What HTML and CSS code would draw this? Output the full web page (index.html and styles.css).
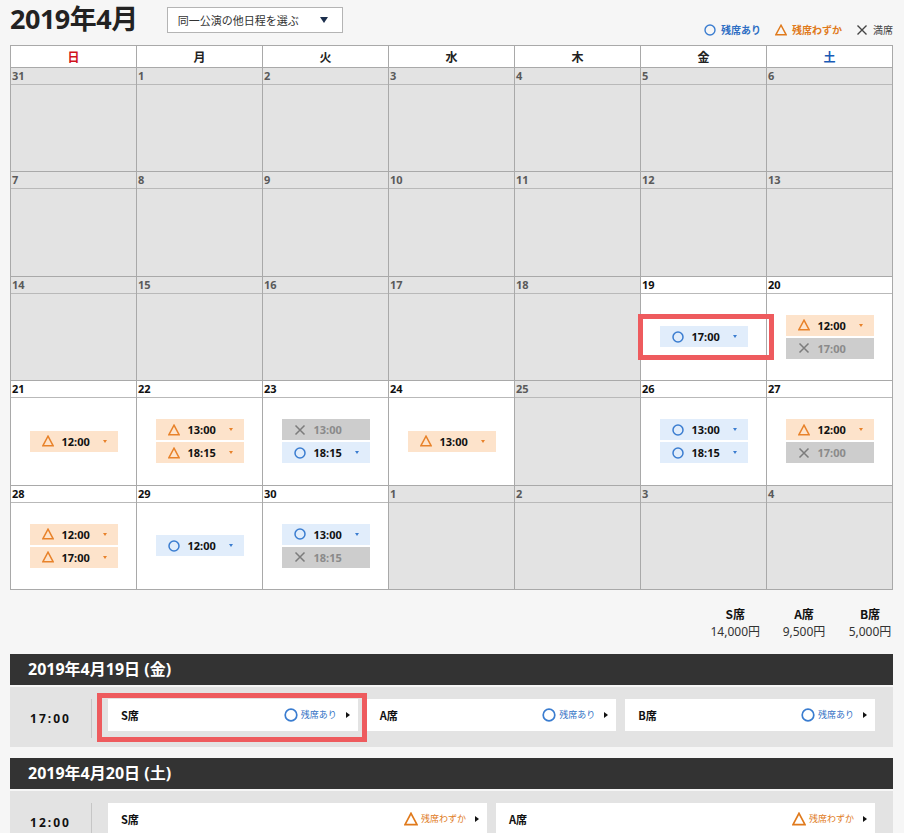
FILE: index.html
```html
<!DOCTYPE html>
<html lang="ja">

<head>
    <meta charset="UTF-8">
    <meta name="viewport" content="width=device-width, initial-scale=1.0">
    <title>公演日程</title>
    <link rel="stylesheet" href="styles.css">
</head>

<body>
    <div class="page">

        <!-- month title / other dates / legend -->
        <div class="top">
            <h1 class="month">2019年4月</h1>
            <div class="select">同一公演の他日程を選ぶ<span class="caret"></span></div>
            <ul class="legend">
                <li class="ok"><svg class="ico" viewBox="0 0 12 12"><circle cx="6" cy="6" r="5"/></svg>残席あり</li>
                <li class="few"><svg class="ico" viewBox="0 0 12 12"><path d="M6 1.2 L11.2 10.8 H0.8 Z"/></svg>残席わずか</li>
                <li class="sold"><svg class="ico" viewBox="0 0 12 12"><path d="M1.5 1.5 L10.5 10.5 M10.5 1.5 L1.5 10.5"/></svg>満席</li>
            </ul>
        </div>

        <!-- calendar -->
        <div class="calendar">
            <div class="dow sun">日</div>
            <div class="dow">月</div>
            <div class="dow">火</div>
            <div class="dow">水</div>
            <div class="dow">木</div>
            <div class="dow">金</div>
            <div class="dow sat">土</div>

            <div class="day off"><div class="num">31</div><div class="slots"></div></div>
            <div class="day off"><div class="num">1</div><div class="slots"></div></div>
            <div class="day off"><div class="num">2</div><div class="slots"></div></div>
            <div class="day off"><div class="num">3</div><div class="slots"></div></div>
            <div class="day off"><div class="num">4</div><div class="slots"></div></div>
            <div class="day off"><div class="num">5</div><div class="slots"></div></div>
            <div class="day off"><div class="num">6</div><div class="slots"></div></div>

            <div class="day off"><div class="num">7</div><div class="slots"></div></div>
            <div class="day off"><div class="num">8</div><div class="slots"></div></div>
            <div class="day off"><div class="num">9</div><div class="slots"></div></div>
            <div class="day off"><div class="num">10</div><div class="slots"></div></div>
            <div class="day off"><div class="num">11</div><div class="slots"></div></div>
            <div class="day off"><div class="num">12</div><div class="slots"></div></div>
            <div class="day off"><div class="num">13</div><div class="slots"></div></div>

            <div class="day off"><div class="num">14</div><div class="slots"></div></div>
            <div class="day off"><div class="num">15</div><div class="slots"></div></div>
            <div class="day off"><div class="num">16</div><div class="slots"></div></div>
            <div class="day off"><div class="num">17</div><div class="slots"></div></div>
            <div class="day off"><div class="num">18</div><div class="slots"></div></div>
            <div class="day">
                <div class="num">19</div>
                <div class="slots">
                    <a class="slot ok hl"><svg class="ico" viewBox="0 0 12 12"><circle cx="6" cy="6" r="5"/></svg><b>17:00</b><i class="arrow"></i></a>
                </div>
            </div>
            <div class="day">
                <div class="num">20</div>
                <div class="slots">
                    <a class="slot few"><svg class="ico" viewBox="0 0 12 12"><path d="M6 1.2 L11.2 10.8 H0.8 Z"/></svg><b>12:00</b><i class="arrow"></i></a>
                    <a class="slot sold"><svg class="ico" viewBox="0 0 12 12"><path d="M1.5 1.5 L10.5 10.5 M10.5 1.5 L1.5 10.5"/></svg><b>17:00</b></a>
                </div>
            </div>

            <div class="day">
                <div class="num">21</div>
                <div class="slots">
                    <a class="slot few"><svg class="ico" viewBox="0 0 12 12"><path d="M6 1.2 L11.2 10.8 H0.8 Z"/></svg><b>12:00</b><i class="arrow"></i></a>
                </div>
            </div>
            <div class="day">
                <div class="num">22</div>
                <div class="slots">
                    <a class="slot few"><svg class="ico" viewBox="0 0 12 12"><path d="M6 1.2 L11.2 10.8 H0.8 Z"/></svg><b>13:00</b><i class="arrow"></i></a>
                    <a class="slot few"><svg class="ico" viewBox="0 0 12 12"><path d="M6 1.2 L11.2 10.8 H0.8 Z"/></svg><b>18:15</b><i class="arrow"></i></a>
                </div>
            </div>
            <div class="day">
                <div class="num">23</div>
                <div class="slots">
                    <a class="slot sold"><svg class="ico" viewBox="0 0 12 12"><path d="M1.5 1.5 L10.5 10.5 M10.5 1.5 L1.5 10.5"/></svg><b>13:00</b></a>
                    <a class="slot ok"><svg class="ico" viewBox="0 0 12 12"><circle cx="6" cy="6" r="5"/></svg><b>18:15</b><i class="arrow"></i></a>
                </div>
            </div>
            <div class="day">
                <div class="num">24</div>
                <div class="slots">
                    <a class="slot few"><svg class="ico" viewBox="0 0 12 12"><path d="M6 1.2 L11.2 10.8 H0.8 Z"/></svg><b>13:00</b><i class="arrow"></i></a>
                </div>
            </div>
            <div class="day off"><div class="num">25</div><div class="slots"></div></div>
            <div class="day">
                <div class="num">26</div>
                <div class="slots">
                    <a class="slot ok"><svg class="ico" viewBox="0 0 12 12"><circle cx="6" cy="6" r="5"/></svg><b>13:00</b><i class="arrow"></i></a>
                    <a class="slot ok"><svg class="ico" viewBox="0 0 12 12"><circle cx="6" cy="6" r="5"/></svg><b>18:15</b><i class="arrow"></i></a>
                </div>
            </div>
            <div class="day">
                <div class="num">27</div>
                <div class="slots">
                    <a class="slot few"><svg class="ico" viewBox="0 0 12 12"><path d="M6 1.2 L11.2 10.8 H0.8 Z"/></svg><b>12:00</b><i class="arrow"></i></a>
                    <a class="slot sold"><svg class="ico" viewBox="0 0 12 12"><path d="M1.5 1.5 L10.5 10.5 M10.5 1.5 L1.5 10.5"/></svg><b>17:00</b></a>
                </div>
            </div>

            <div class="day">
                <div class="num">28</div>
                <div class="slots">
                    <a class="slot few"><svg class="ico" viewBox="0 0 12 12"><path d="M6 1.2 L11.2 10.8 H0.8 Z"/></svg><b>12:00</b><i class="arrow"></i></a>
                    <a class="slot few"><svg class="ico" viewBox="0 0 12 12"><path d="M6 1.2 L11.2 10.8 H0.8 Z"/></svg><b>17:00</b><i class="arrow"></i></a>
                </div>
            </div>
            <div class="day">
                <div class="num">29</div>
                <div class="slots">
                    <a class="slot ok"><svg class="ico" viewBox="0 0 12 12"><circle cx="6" cy="6" r="5"/></svg><b>12:00</b><i class="arrow"></i></a>
                </div>
            </div>
            <div class="day">
                <div class="num">30</div>
                <div class="slots">
                    <a class="slot ok"><svg class="ico" viewBox="0 0 12 12"><circle cx="6" cy="6" r="5"/></svg><b>13:00</b><i class="arrow"></i></a>
                    <a class="slot sold"><svg class="ico" viewBox="0 0 12 12"><path d="M1.5 1.5 L10.5 10.5 M10.5 1.5 L1.5 10.5"/></svg><b>18:15</b></a>
                </div>
            </div>
            <div class="day off"><div class="num">1</div><div class="slots"></div></div>
            <div class="day off"><div class="num">2</div><div class="slots"></div></div>
            <div class="day off"><div class="num">3</div><div class="slots"></div></div>
            <div class="day off"><div class="num">4</div><div class="slots"></div></div>
        </div>

        <!-- prices -->
        <div class="prices">
            <div class="price"><b>S席</b><span>14,000円</span></div>
            <div class="price"><b>A席</b><span>9,500円</span></div>
            <div class="price"><b>B席</b><span>5,000円</span></div>
        </div>

        <!-- performances of the selected days -->
        <section class="perf">
            <h2 class="perf-date">2019年4月19日 (金)</h2>
            <div class="time-row">
                <div class="time">17:00</div>
                <div class="seats">
                    <a class="seat hl"><b>S席</b><span class="stock ok"><svg class="ico" viewBox="0 0 14 14"><circle cx="7" cy="7" r="5.8"/></svg>残席あり</span><i class="go"></i></a>
                    <a class="seat"><b>A席</b><span class="stock ok"><svg class="ico" viewBox="0 0 14 14"><circle cx="7" cy="7" r="5.8"/></svg>残席あり</span><i class="go"></i></a>
                    <a class="seat"><b>B席</b><span class="stock ok"><svg class="ico" viewBox="0 0 14 14"><circle cx="7" cy="7" r="5.8"/></svg>残席あり</span><i class="go"></i></a>
                </div>
            </div>
        </section>

        <section class="perf">
            <h2 class="perf-date">2019年4月20日 (土)</h2>
            <div class="time-row">
                <div class="time">12:00</div>
                <div class="seats">
                    <a class="seat"><b>S席</b><span class="stock few"><svg class="ico" viewBox="0 0 14 14"><path d="M7 1.3 L13 12.6 H1 Z"/></svg>残席わずか</span><i class="go"></i></a>
                    <a class="seat"><b>A席</b><span class="stock few"><svg class="ico" viewBox="0 0 14 14"><path d="M7 1.3 L13 12.6 H1 Z"/></svg>残席わずか</span><i class="go"></i></a>
                </div>
            </div>
        </section>

    </div>
</body>

</html>
```

FILE: styles.css
```css
body {
    margin: 0;
    padding: 0;
    background-color: #f6f6f6;
    font-family: "Noto Sans", "Noto Sans CJK JP", sans-serif;
    color: #222;
}

.page {
    padding: 0 11px 40px 10px;
}

/* top bar */
.top {
    display: flex;
    align-items: flex-start;
    height: 45px;
}

.month {
    margin: 0;
    padding-top: 3px;
    font-size: 27px;
    line-height: 32px;
    font-weight: 700;
    letter-spacing: -0.5px;
}

.select {
    display: flex;
    align-items: center;
    box-sizing: border-box;
    width: 176px;
    height: 26px;
    margin: 7px 0 0 29px;
    padding: 0 14px 0 10px;
    background-color: white;
    border: 1px solid #b4b4b4;
    font-family: "Noto Sans CJK JP", sans-serif;
    font-size: 11px;
    color: #333;
}

.caret {
    margin-left: auto;
    border-left: 4.5px solid transparent;
    border-right: 4.5px solid transparent;
    border-top: 6px solid #1c2f4d;
}

.legend {
    display: flex;
    gap: 14px;
    margin: 22px 0 0 auto;
    padding: 0;
    list-style: none;
    font-family: "Noto Sans CJK JP", sans-serif;
    font-size: 10px;
    font-weight: 700;
    line-height: 16px;
}

.legend li {
    display: flex;
    align-items: center;
}

.legend .ico {
    width: 12px;
    height: 12px;
    margin-right: 5px;
}

.legend .sold {
    font-weight: 400;
    color: #444;
}

/* status colours */
.ico {
    fill: none;
    stroke: currentColor;
    stroke-width: 1.4;
}

.ok { color: #2f6fc4; }
.few { color: #e07a1c; }
.sold { color: #808080; }
.legend .ok .ico { color: #3b7dd0; }

/* calendar */
.calendar {
    display: grid;
    grid-template-columns: repeat(7, 1fr);
    border-top: 1px solid #a9a9a9;
    border-left: 1px solid #a9a9a9;
}

.dow {
    height: 21px;
    line-height: 21px;
    text-align: center;
    background-color: white;
    border-right: 1px solid #a9a9a9;
    border-bottom: 1px solid #a9a9a9;
    font-family: "Noto Sans CJK JP", sans-serif;
    font-size: 12px;
    font-weight: 700;
}

.dow.sun { color: #d0121b; }
.dow.sat { color: #1a5bb5; }

.day {
    background-color: white;
    border-right: 1px solid #a9a9a9;
    border-bottom: 1px solid #a9a9a9;
}

.day.off {
    background-color: #e3e3e3;
}

.num {
    height: 16px;
    padding-left: 1px;
    border-bottom: 1px solid #b9b9b9;
    font-size: 11px;
    font-weight: 700;
    line-height: 16px;
    color: #111;
}

.off .num {
    color: #5a5a5a;
}

.slots {
    display: flex;
    flex-direction: column;
    align-items: center;
    justify-content: center;
    gap: 2px;
    height: 86.4px;
}

.slot {
    position: relative;
    display: flex;
    align-items: center;
    box-sizing: border-box;
    width: 88px;
    height: 21px;
    padding: 0 11px 0 12px;
    cursor: pointer;
}

.slot .ico {
    width: 12px;
    height: 12px;
    stroke-width: 1.5;
}

.slot b {
    margin-left: 8px;
    font-size: 11px;
    font-weight: 700;
    color: #111;
}

.slot.ok { background-color: #e1edfb; color: #3b7dd0; }
.slot.few { background-color: #fde3cb; color: #e8822a; }
.slot.sold { background-color: #cdcdcd; color: #7c7c7c; }
.slot.sold b { color: #8a8a8a; }

.arrow {
    margin-left: auto;
    border-left: 2.5px solid transparent;
    border-right: 2.5px solid transparent;
    border-top: 3.5px solid currentColor;
}

/* red marker drawn over the chosen item */
.hl::after {
    content: "";
    position: absolute;
    border: 5px solid #ee5b5e;
    pointer-events: none;
}

.slot.hl::after {
    top: -12px;
    right: -26px;
    bottom: -13px;
    left: -22px;
}

.seat.hl::after {
    top: -6px;
    right: -9px;
    bottom: -11px;
    left: -11px;
}

/* prices */
.prices {
    display: flex;
    justify-content: flex-end;
    gap: 22px;
    margin-top: 15px;
    padding-right: 1px;
    font-size: 12px;
    line-height: 18px;
}

.price {
    display: flex;
    flex-direction: column;
    align-items: center;
    min-width: 44px;
}

.price b {
    font-family: "Noto Sans CJK JP", sans-serif;
    font-weight: 700;
    color: #111;
}

.price span {
    color: #333;
}

/* performance list */
.perf {
    margin-top: 13px;
}

.perf + .perf {
    margin-top: 11px;
}

.perf-date {
    margin: 0;
    height: 31px;
    padding-left: 18px;
    background-color: #333;
    color: white;
    font-size: 16px;
    font-weight: 700;
    line-height: 31px;
}

.time-row {
    display: flex;
    margin-top: 2px;
    padding: 12px 18px 9px 0;
    background-color: #e3e3e3;
}

.time {
    display: flex;
    align-items: center;
    justify-content: center;
    width: 81px;
    font-size: 12px;
    font-weight: 700;
    letter-spacing: 2px;
    color: #111;
}

.seats {
    display: flex;
    flex: 1;
    gap: 9px;
    padding: 0 0 7px 16px;
    border-left: 1px solid #c6c6c6;
}

.seat {
    position: relative;
    display: flex;
    align-items: center;
    flex: 1;
    height: 32px;
    padding: 0 8px 0 13px;
    background-color: white;
    cursor: pointer;
}

.seat b {
    font-family: "Noto Sans CJK JP", sans-serif;
    font-size: 11px;
    font-weight: 700;
    color: #111;
}

.stock {
    display: flex;
    align-items: center;
    margin-left: auto;
    font-family: "Noto Sans CJK JP", sans-serif;
    font-size: 9px;
}

.stock .ico {
    width: 14px;
    height: 14px;
    margin-right: 3px;
    stroke-width: 1.7;
}

.stock.ok .ico { color: #3b7dd0; }

.go {
    margin-left: 9px;
    border-top: 3px solid transparent;
    border-bottom: 3px solid transparent;
    border-left: 4px solid #111;
}
```
